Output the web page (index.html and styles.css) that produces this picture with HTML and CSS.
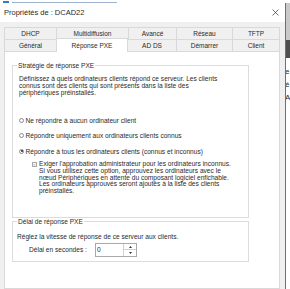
FILE: index.html
```html
<!DOCTYPE html>
<html lang="fr">
<head>
    <meta charset="UTF-8">
    <meta name="viewport" content="width=device-width, initial-scale=1.0">
    <title>Propriétés de : DCAD22</title>
    <link rel="stylesheet" href="styles.css">
</head>
<body>
    <div class="ecran">
        <div class="fond-haut"><span class="fond-icone"></span><span class="fond-texte"></span></div>
        <div class="ecran-bas">
            <div class="dialogue">
                <div class="barre-titre">
                    <span class="titre">Propriétés de : DCAD22</span>
                    <svg class="fermer" viewBox="0 0 7 7"><path d="M0.5 0.5 L6.5 6.5 M6.5 0.5 L0.5 6.5" stroke="#333" stroke-width="0.7" fill="none"/></svg>
                </div>
                <div class="corps">
                    <div class="onglets">
                        <div class="rangee">
                            <div class="onglet">DHCP</div>
                            <div class="onglet">Multidiffusion</div>
                            <div class="onglet">Avancé</div>
                            <div class="onglet">Réseau</div>
                            <div class="onglet">TFTP</div>
                        </div>
                        <div class="rangee">
                            <div class="onglet">Général</div>
                            <div class="onglet actif">Réponse PXE</div>
                            <div class="onglet">AD DS</div>
                            <div class="onglet">Démarrer</div>
                            <div class="onglet">Client</div>
                        </div>
                    </div>
                    <div class="panneau">
                        <fieldset class="groupe groupe-strategie">
                            <legend>Stratégie de réponse PXE</legend>
                            <p class="texte">Définissez à quels ordinateurs clients répond ce serveur. Les clients<br>connus sont des clients qui sont présents dans la liste des<br>périphériques préinstallés.</p>
                            <div class="options">
                                <div class="option"><span class="radio"></span>Ne répondre à aucun ordinateur client</div>
                                <div class="option"><span class="radio"></span>Répondre uniquement aux ordinateurs clients connus</div>
                                <div class="option"><span class="radio coche"></span>Répondre à tous les ordinateurs clients (connus et inconnus)</div>
                            </div>
                            <div class="case-ligne">
                                <span class="case"><svg viewBox="0 0 4 4"><path d="M0.6 2 L1.6 3 L3.4 0.9" stroke="#6a6a6a" stroke-width="0.7" fill="none"/></svg></span>
                                <p>Exiger l'approbation administrateur pour les ordinateurs inconnus.<br>Si vous utilisez cette option, approuvez les ordinateurs avec le<br>nœud Périphériques en attente du composant logiciel enfichable.<br>Les ordinateurs approuvés seront ajoutés à la liste des clients<br>préinstallés.</p>
                            </div>
                        </fieldset>
                        <fieldset class="groupe groupe-delai">
                            <legend>Délai de réponse PXE</legend>
                            <p class="texte texte-delai">Réglez la vitesse de réponse de ce serveur aux clients.</p>
                            <div class="delai">
                                <span class="delai-libelle">Délai en secondes :</span>
                                <div class="compteur">
                                    <span class="compteur-valeur">0</span>
                                    <div class="compteur-fleches">
                                        <span class="fleche"><svg viewBox="0 0 3 2"><path d="M0 2 L1.5 0 L3 2 Z" fill="#333"/></svg></span>
                                        <span class="fleche"><svg viewBox="0 0 3 2"><path d="M0 0 L3 0 L1.5 2 Z" fill="#333"/></svg></span>
                                    </div>
                                </div>
                            </div>
                        </fieldset>
                    </div>
                </div>
            </div>
            <div class="fond-droite">
                <div class="fd-gris"></div>
                <div class="fd-sombre"></div>
                <div class="fd-blanc">e<br>é<br>A</div>
            </div>
        </div>
    </div>
</body>
</html>
```

FILE: styles.css
```css
* {
    margin: 0;
    padding: 0;
    box-sizing: border-box;
}
body {
    width: 290px;
    height: 289px;
    overflow: hidden;
    font-family: "Liberation Sans", Arial, sans-serif;
    color: #2a2a2a;
    background-color: #fff;
}
.ecran {
    display: flex;
    flex-direction: column;
    height: 289px;
}

/* fenêtre en arrière-plan */
.fond-haut {
    height: 3px;
    background-color: #fff;
    display: flex;
    align-items: flex-end;
    gap: 3px;
    padding-left: 3px;
}
.fond-icone {
    width: 6px;
    height: 2px;
    background-color: #3c78c8;
}
.fond-texte {
    width: 105px;
    height: 1px;
    background-color: #9db2cc;
}
.ecran-bas {
    flex: 1;
    display: flex;
    min-height: 0;
}
.fond-droite {
    flex: 1;
    display: flex;
    flex-direction: column;
    overflow: hidden;
}
.fd-gris {
    height: 37px;
    background-color: #c9c9c9;
}
.fd-sombre {
    height: 18px;
    background-color: #4f4f4f;
}
.fd-blanc {
    flex: 1;
    background-color: #fff;
    font-size: 8px;
    line-height: 13px;
    padding-top: 7px;
    margin-left: -1px;
}

/* boîte de dialogue */
.dialogue {
    width: 286px;
    display: flex;
    flex-direction: column;
    background-color: #f0f0f0;
    border-right: 1px solid #707070;
}
.barre-titre {
    height: 19px;
    background-color: #fff;
    display: flex;
    align-items: center;
    justify-content: space-between;
    padding: 0 6px 0 4px;
}
.titre {
    font-size: 7.5px;
}
.fermer {
    width: 7px;
    height: 7px;
}
.corps {
    flex: 1;
    display: flex;
    flex-direction: column;
    min-height: 0;
    padding: 5px 5px 0 4px;
}
.rangee {
    display: grid;
    grid-template-columns: 52px 72px 48px 56px 48px;
    grid-template-rows: 12px;
}
.onglet {
    display: flex;
    align-items: center;
    justify-content: center;
    font-size: 6.5px;
    background-color: #f0f0f0;
    border: 1px solid #d9d9d9;
    border-right: none;
    border-bottom: none;
}
.onglet:last-child {
    border-right: 1px solid #d9d9d9;
}
.onglet.actif {
    align-self: start;
    height: 14px;
    margin-top: -1px;
    background-color: #fff;
    border-right: 1px solid #d9d9d9;
    position: relative;
    z-index: 2;
}
.actif + .onglet {
    border-left: none;
}
.panneau {
    flex: 1;
    background-color: #fff;
    border: 1px solid #d9d9d9;
    padding: 10px 0 0 7px;
}

/* cadres de groupe */
.groupe {
    width: 237px;
    border: 1px solid #dcdcdc;
    padding: 0 6px;
    white-space: nowrap;
}
.groupe legend {
    font-size: 6.6px;
    line-height: 7px;
    padding: 0 1px;
    margin-left: -2px;
}
.groupe-strategie {
    padding-bottom: 22px;
}
.groupe-delai {
    padding-bottom: 4px;
}
.texte {
    font-size: 6.6px;
    line-height: 7px;
    margin-top: 6px;
}
.texte-delai {
    margin: 8.5px 0 0 -2px;
}
.options {
    display: flex;
    flex-direction: column;
    gap: 8.5px;
    margin-top: 20.5px;
}
.option {
    display: flex;
    align-items: center;
    gap: 1.5px;
    font-size: 6.6px;
    line-height: 7px;
}
.radio {
    width: 5px;
    height: 5px;
    border: 1px solid #8a8a8a;
    border-radius: 50%;
    display: flex;
    align-items: center;
    justify-content: center;
}
.radio.coche::after {
    content: "";
    width: 2px;
    height: 2px;
    border-radius: 50%;
    background-color: #222;
}
.case-ligne {
    display: flex;
    align-items: flex-start;
    gap: 2px;
    margin: 6.5px 0 0 13px;
}
.case {
    width: 5px;
    height: 5px;
    margin-top: 1px;
    border: 1px solid #a6a6a6;
    display: flex;
}
.case svg {
    width: 100%;
    height: 100%;
}
.case-ligne p {
    font-size: 6.6px;
    line-height: 6.8px;
}

/* compteur de délai */
.delai {
    display: flex;
    align-items: center;
    margin-top: 2.5px;
    padding-left: 10px;
    font-size: 6.6px;
}
.delai-libelle {
    width: 66px;
}
.compteur {
    width: 42px;
    height: 14px;
    display: flex;
    background-color: #fff;
    border: 1px solid #a9a9a9;
}
.compteur-valeur {
    flex: 1;
    display: flex;
    align-items: center;
    padding-left: 1px;
}
.compteur-fleches {
    width: 13px;
    display: flex;
    flex-direction: column;
    border-left: 1px solid #d0d0d0;
}
.fleche {
    flex: 1;
    display: flex;
    align-items: center;
    justify-content: center;
}
.fleche + .fleche {
    border-top: 1px solid #d0d0d0;
}
.fleche svg {
    width: 3px;
    height: 2px;
}
```
